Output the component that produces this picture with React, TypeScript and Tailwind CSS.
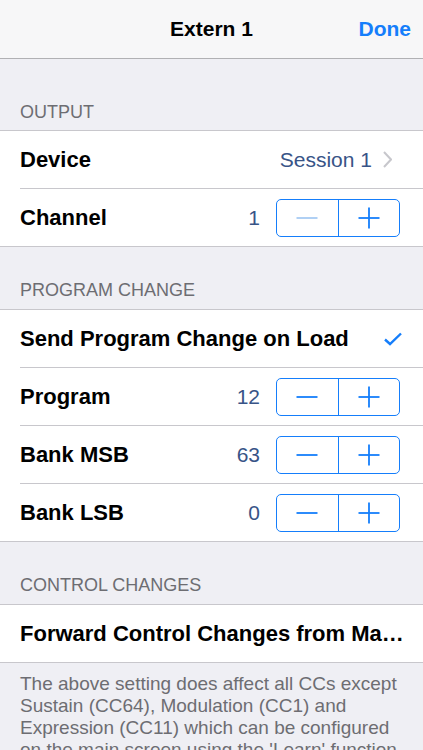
import React from 'react';

const BLUE = '#157efb';

const Minus: React.FC<{ disabled?: boolean }> = ({ disabled }) => (
    <svg width="22" height="4" viewBox="0 0 22 4">
        <line x1="0.5" y1="2" x2="21.5" y2="2" stroke={disabled ? '#a8cbf3' : BLUE} strokeWidth="1.8" />
    </svg>
);

const Plus: React.FC = () => (
    <svg width="22" height="22" viewBox="0 0 22 22">
        <line x1="0.5" y1="11" x2="21.5" y2="11" stroke={BLUE} strokeWidth="1.8" />
        <line x1="11" y1="0.5" x2="11" y2="21.5" stroke={BLUE} strokeWidth="1.8" />
    </svg>
);

const Stepper: React.FC<{ minusDisabled?: boolean }> = ({ minusDisabled }) => (
    <div className="flex h-[38px] w-[124px] shrink-0 rounded-[5px] border border-[#157efb]">
        <button type="button" className="flex flex-1 items-center justify-center border-r border-[#157efb]">
            <Minus disabled={minusDisabled} />
        </button>
        <button type="button" className="flex flex-1 items-center justify-center">
            <Plus />
        </button>
    </div>
);

const Row: React.FC<{ last?: boolean; children: React.ReactNode; className?: string }> = ({ last, children, className }) => (
    <div className="pl-5 bg-white">
        <div className={`flex h-[57px] items-center ${last ? '' : 'box-content border-b border-[#c8c7cc]'} ${className ?? ''}`}>
            {children}
        </div>
    </div>
);

const Label: React.FC<{ children: React.ReactNode }> = ({ children }) => (
    <span className="text-[22px] font-bold text-black truncate">{children}</span>
);

const StepperRow: React.FC<{ label: string; value: string; last?: boolean; minusDisabled?: boolean }> = ({ label, value, last, minusDisabled }) => (
    <Row last={last} className="pr-[23px]">
        <Label>{label}</Label>
        <span className="ml-auto mr-4 text-[21px] text-[#385487]">{value}</span>
        <Stepper minusDisabled={minusDisabled} />
    </Row>
);

const SectionHeader: React.FC<{ title: string; first?: boolean }> = ({ title, first }) => (
    <div className={`px-5 ${first ? 'pt-[42px] pb-[7px]' : 'pt-[32px] pb-[8px]'} text-[18px] leading-[22px] text-[#6d6d72]`}>
        {title}
    </div>
);

export default function App() {
    return (
        <div
            className="w-[423px] h-[750px] overflow-hidden bg-[#efeff4] flex flex-col"
            style={{ fontFamily: '"Liberation Sans", Arial, sans-serif' }}
        >
            <header className="h-[59px] shrink-0 bg-[#f7f7f8] border-b border-[#b1b1b4] flex items-center relative">
                <h1 className="flex-1 text-center text-[21px] font-bold text-black">Extern 1</h1>
                <button type="button" className="absolute right-3 text-[21px] font-bold text-[#157efb]">
                    Done
                </button>
            </header>

            <SectionHeader title="OUTPUT" first />
            <section className="border-y border-[#c8c7cc]">
                <Row className="pr-[31px]">
                    <Label>Device</Label>
                    <span className="ml-auto mr-[11px] text-[21px] text-[#385487]">Session 1</span>
                    <svg width="9" height="17" viewBox="0 0 9 17">
                        <polyline points="1,1 8,8.5 1,16" fill="none" stroke="#c7c7cc" strokeWidth="2" />
                    </svg>
                </Row>
                <StepperRow label="Channel" value="1" last minusDisabled />
            </section>

            <SectionHeader title="PROGRAM CHANGE" />
            <section className="border-y border-[#c8c7cc]">
                <Row className="pr-[21px]">
                    <Label>Send Program Change on Load</Label>
                    <svg className="ml-auto" width="18" height="14" viewBox="0 0 18 14">
                        <polyline points="1,7.5 6,12 17,1.5" fill="none" stroke={BLUE} strokeWidth="2.4" />
                    </svg>
                </Row>
                <StepperRow label="Program" value="12" />
                <StepperRow label="Bank MSB" value="63" />
                <StepperRow label="Bank LSB" value="0" last />
            </section>

            <SectionHeader title="CONTROL CHANGES" />
            <section className="border-y border-[#c8c7cc]">
                <Row last className="pr-[16px]">
                    <Label>Forward Control Changes from Main Keyboard</Label>
                </Row>
            </section>

            <p className="px-5 pt-[10px] text-[19px] leading-[22px] text-[#6d6d72]">
                The above setting does affect all CCs except Sustain (CC64), Modulation (CC1) and Expression (CC11) which can be configured on the main screen using the 'Learn' function.
            </p>
        </div>
    );
}
